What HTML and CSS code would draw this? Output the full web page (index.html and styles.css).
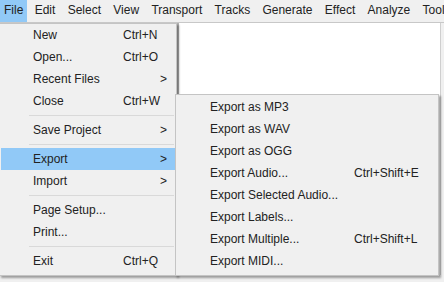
FILE: index.html
```html
<!DOCTYPE html>
<html lang="en">
<head>
  <meta charset="UTF-8" />
  <title>Audio Editor</title>
  <link rel="stylesheet" href="styles.css">
</head>

<body>
  <div class="menubar">
    <span class="menu-title active">File</span>
    <span class="menu-title">Edit</span>
    <span class="menu-title">Select</span>
    <span class="menu-title">View</span>
    <span class="menu-title">Transport</span>
    <span class="menu-title">Tracks</span>
    <span class="menu-title">Generate</span>
    <span class="menu-title">Effect</span>
    <span class="menu-title">Analyze</span>
    <span class="menu-title">Tools</span>
  </div>

  <div class="main">
    <div class="side"></div>
    <div class="workspace"></div>
  </div>

  <div class="menu file-menu">
    <div class="item"><span>New</span><span>Ctrl+N</span><span></span></div>
    <div class="item"><span>Open...</span><span>Ctrl+O</span><span></span></div>
    <div class="item"><span>Recent Files</span><span></span><span>&gt;</span></div>
    <div class="item"><span>Close</span><span>Ctrl+W</span><span></span></div>
    <div class="sep"></div>
    <div class="item"><span>Save Project</span><span></span><span>&gt;</span></div>
    <div class="sep"></div>
    <div class="item selected"><span>Export</span><span></span><span>&gt;</span></div>
    <div class="item"><span>Import</span><span></span><span>&gt;</span></div>
    <div class="sep"></div>
    <div class="item"><span>Page Setup...</span><span></span><span></span></div>
    <div class="item"><span>Print...</span><span></span><span></span></div>
    <div class="sep"></div>
    <div class="item"><span>Exit</span><span>Ctrl+Q</span><span></span></div>
  </div>

  <div class="menu export-menu">
    <div class="item"><span>Export as MP3</span><span></span></div>
    <div class="item"><span>Export as WAV</span><span></span></div>
    <div class="item"><span>Export as OGG</span><span></span></div>
    <div class="item"><span>Export Audio...</span><span>Ctrl+Shift+E</span></div>
    <div class="item"><span>Export Selected Audio...</span><span></span></div>
    <div class="item"><span>Export Labels...</span><span></span></div>
    <div class="item"><span>Export Multiple...</span><span>Ctrl+Shift+L</span></div>
    <div class="item"><span>Export MIDI...</span><span></span></div>
  </div>
</body>
</html>
```

FILE: styles.css
```css
body {
  margin: 0;
  width: 444px;
  height: 282px;
  overflow: hidden;
  position: relative;
  background: #f0f0f0;
  font-family: "Liberation Sans", Arial, sans-serif;
  font-size: 12px;
  color: #222;
}
.menubar {
  display: flex;
  height: 22px;
  background: #f0f0f0;
  border-bottom: 1px solid #c8c8c8;
  white-space: nowrap;
}
.menu-title {
  padding: 0 6px 0 6.3px;
  line-height: 21px;
}
.menu-title:first-child {
  padding: 0 4px;
  margin-right: 1px;
}
.menu-title.active {
  background: #91c9f7;
}
.main {
  display: flex;
  height: 252px;
}
.side {
  width: 177px;
}
.workspace {
  width: 261px;
  background: white;
  border-left: 2px solid #b4b4b4;
  border-right: 1px solid #cfcfcf;
}
.menu {
  position: absolute;
  background: #f0f0f0;
  border: 1px solid #c4c4c4;
  padding: 1px;
  box-shadow: 2px 2px 2px rgba(0,0,0,0.35);
  white-space: nowrap;
}
.item {
  display: grid;
  height: 22px;
  align-items: center;
}
.item.selected {
  background: #91c9f7;
}
.file-menu {
  left: -1px;
  top: 23px;
  width: 174px;
  padding-top: 0;
  padding-bottom: 3px;
}
.file-menu .item {
  grid-template-columns: 90px 37px 1fr;
  padding-left: 32px;
}
.sep {
  height: 1px;
  margin: 3px 1px 3px 28px;
  background: #d9d9d9;
}
.export-menu {
  left: 175px;
  top: 94px;
  width: 260px;
  padding-bottom: 3px;
}
.export-menu .item {
  grid-template-columns: 144px 1fr;
  padding-left: 33px;
}
```
